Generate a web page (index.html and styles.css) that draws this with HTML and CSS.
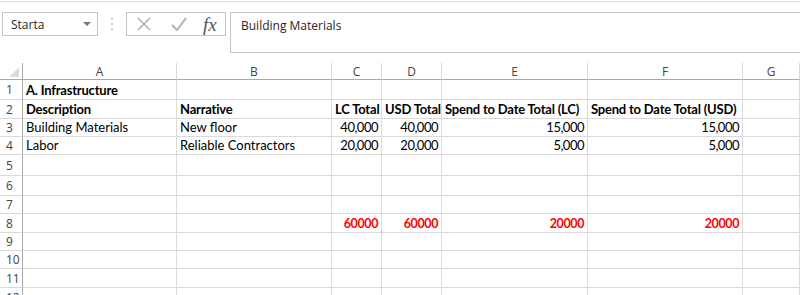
FILE: index.html
```html
<!DOCTYPE html>
<html lang="en">
<head>
    <meta charset="UTF-8">
    <title>sheet</title>
    <link rel="stylesheet" href="styles.css">
</head>
<body>
    <div class="fbar">
        <div class="namebox">
            <span>Starta</span>
            <span class="nb-arrow"></span>
        </div>
        <div class="fb-dots">
            <svg width="4" height="14" viewBox="0 0 4 14"><circle cx="2" cy="2" r="1" fill="#b9b9b9"/><circle cx="2" cy="7" r="1" fill="#b9b9b9"/><circle cx="2" cy="12" r="1" fill="#b9b9b9"/></svg>
        </div>
        <div class="fb-btns">
            <svg class="fb-x" width="16" height="16" viewBox="0 0 16 16"><path d="M2 2L14 14M14 2L2 14" stroke="#b4b4b4" stroke-width="1.6" fill="none"/></svg>
            <svg class="fb-ok" width="18" height="16" viewBox="0 0 18 16"><path d="M2 9L7 14L16 2" stroke="#b4b4b4" stroke-width="2" fill="none"/></svg>
            <span class="fb-fx">fx</span>
        </div>
        <div class="fb-input">Building Materials</div>
    </div>

    <div class="sheet">
        <div class="hd corner"><span class="tri"></span></div>
        <div class="hd col">A</div>
        <div class="hd col">B</div>
        <div class="hd col">C</div>
        <div class="hd col">D</div>
        <div class="hd col">E</div>
        <div class="hd col">F</div>
        <div class="hd col">G</div>

        <div class="hd row">1</div>
        <div class="c b">A. Infrastructure</div>
        <div class="c"></div><div class="c"></div><div class="c"></div><div class="c"></div><div class="c"></div><div class="c"></div>

        <div class="hd row">2</div>
        <div class="c b">Description</div>
        <div class="c b">Narrative</div>
        <div class="c b">LC Total</div>
        <div class="c b">USD Total</div>
        <div class="c b">Spend to Date Total (LC)</div>
        <div class="c b">Spend to Date Total (USD)</div>
        <div class="c"></div>

        <div class="hd row">3</div>
        <div class="c">Building Materials</div>
        <div class="c">New floor</div>
        <div class="c n">40,000</div>
        <div class="c n">40,000</div>
        <div class="c n">15,000</div>
        <div class="c n">15,000</div>
        <div class="c"></div>

        <div class="hd row">4</div>
        <div class="c">Labor</div>
        <div class="c">Reliable Contractors</div>
        <div class="c n">20,000</div>
        <div class="c n">20,000</div>
        <div class="c n">5,000</div>
        <div class="c n">5,000</div>
        <div class="c"></div>

        <div class="hd row">5</div>
        <div class="c"></div><div class="c"></div><div class="c"></div><div class="c"></div><div class="c"></div><div class="c"></div><div class="c"></div>

        <div class="hd row">6</div>
        <div class="c"></div><div class="c"></div><div class="c"></div><div class="c"></div><div class="c"></div><div class="c"></div><div class="c"></div>

        <div class="hd row">7</div>
        <div class="c"></div><div class="c"></div><div class="c"></div><div class="c"></div><div class="c"></div><div class="c"></div><div class="c"></div>

        <div class="hd row">8</div>
        <div class="c"></div>
        <div class="c"></div>
        <div class="c n red">60000</div>
        <div class="c n red">60000</div>
        <div class="c n red">20000</div>
        <div class="c n red">20000</div>
        <div class="c"></div>

        <div class="hd row">9</div>
        <div class="c"></div><div class="c"></div><div class="c"></div><div class="c"></div><div class="c"></div><div class="c"></div><div class="c"></div>

        <div class="hd row">10</div>
        <div class="c"></div><div class="c"></div><div class="c"></div><div class="c"></div><div class="c"></div><div class="c"></div><div class="c"></div>

        <div class="hd row">11</div>
        <div class="c"></div><div class="c"></div><div class="c"></div><div class="c"></div><div class="c"></div><div class="c"></div><div class="c"></div>

        <div class="hd row">12</div>
        <div class="c"></div><div class="c"></div><div class="c"></div><div class="c"></div><div class="c"></div><div class="c"></div><div class="c"></div>
    </div>
</body>
</html>
```

FILE: styles.css
```css
* {
    box-sizing: border-box;
}

body {
    margin: 0;
    height: 295px;
    overflow: hidden;
    background-color: #fff;
    font-family: "Open Sans", "Noto Sans", sans-serif;
    color: #262626;
}

/* formula bar */
.fbar {
    display: flex;
    align-items: flex-start;
    height: 62px;
    margin-top: 1px;
    padding: 10px 0 0 2px;
    border-top: 1px solid #dadada;
}

.namebox {
    display: flex;
    align-items: center;
    justify-content: space-between;
    width: 96px;
    height: 24px;
    padding: 0 6px 0 8px;
    border: 1px solid #c6c6c6;
    font-size: 12px;
}

.nb-arrow {
    width: 0;
    height: 0;
    border-left: 4px solid transparent;
    border-right: 4px solid transparent;
    border-top: 4px solid #777;
}

.fb-dots {
    display: flex;
    width: 28px;
    height: 24px;
    align-items: center;
    justify-content: center;
}

.fb-btns {
    display: flex;
    align-items: center;
    width: 100px;
    height: 24px;
    padding-left: 9px;
    border: 1px solid #c6c6c6;
}

.fb-x {
    margin-right: 18px;
}

.fb-ok {
    margin-right: 15px;
}

.fb-fx {
    font-family: "Liberation Serif", serif;
    font-style: italic;
    font-size: 19px;
    color: #555;
    line-height: 1;
}

.fb-input {
    flex: 1;
    height: 41px;
    margin-left: 4px;
    padding: 4px 10px;
    border: 1px solid #c6c6c6;
    border-right: none;
    font-size: 12px;
}

/* grid */
.sheet {
    display: grid;
    grid-template-columns: 23px 154px 155px 50px 60px 146px 155px 1fr;
    grid-template-rows: 17px 20px 19px 18px 18px 21px 20px 18px 19px 18px 18px 19px 19px;
    font-family: "Lato", "Liberation Sans", sans-serif;
    font-size: 13px;
    color: #000;
}

.hd {
    display: flex;
    align-items: center;
    justify-content: center;
    color: #444;
    font-family: "Open Sans", "Noto Sans", sans-serif;
    font-size: 12px;
    background-color: #fff;
}

.corner {
    position: relative;
    border-right: 1px solid #a8a8a8;
    border-bottom: 1px solid #a8a8a8;
}

.tri {
    position: absolute;
    right: 3px;
    bottom: 2px;
    width: 0;
    height: 0;
    border-left: 10px solid transparent;
    border-bottom: 10px solid #dcdcdc;
}

.col {
    border-right: 1px solid #d9d9d9;
    border-bottom: 1px solid #a8a8a8;
}

.row {
    border-right: 1px solid #a8a8a8;
    border-bottom: 1px solid #d9d9d9;
    justify-content: flex-start;
    padding-left: 6px;
}

.c {
    display: flex;
    align-items: flex-end;
    padding: 0 3px 0 3px;
    border-right: 1px solid #dadada;
    border-bottom: 1px solid #dadada;
    white-space: nowrap;
    line-height: 17px;
}

.b {
    font-weight: bold;
    letter-spacing: -0.2px;
}

.n {
    justify-content: flex-end;
    letter-spacing: -0.5px;
}

.red {
    color: #ff0000;
    font-weight: bold;
    font-size: 12.5px;
    letter-spacing: -0.4px;
}
```
